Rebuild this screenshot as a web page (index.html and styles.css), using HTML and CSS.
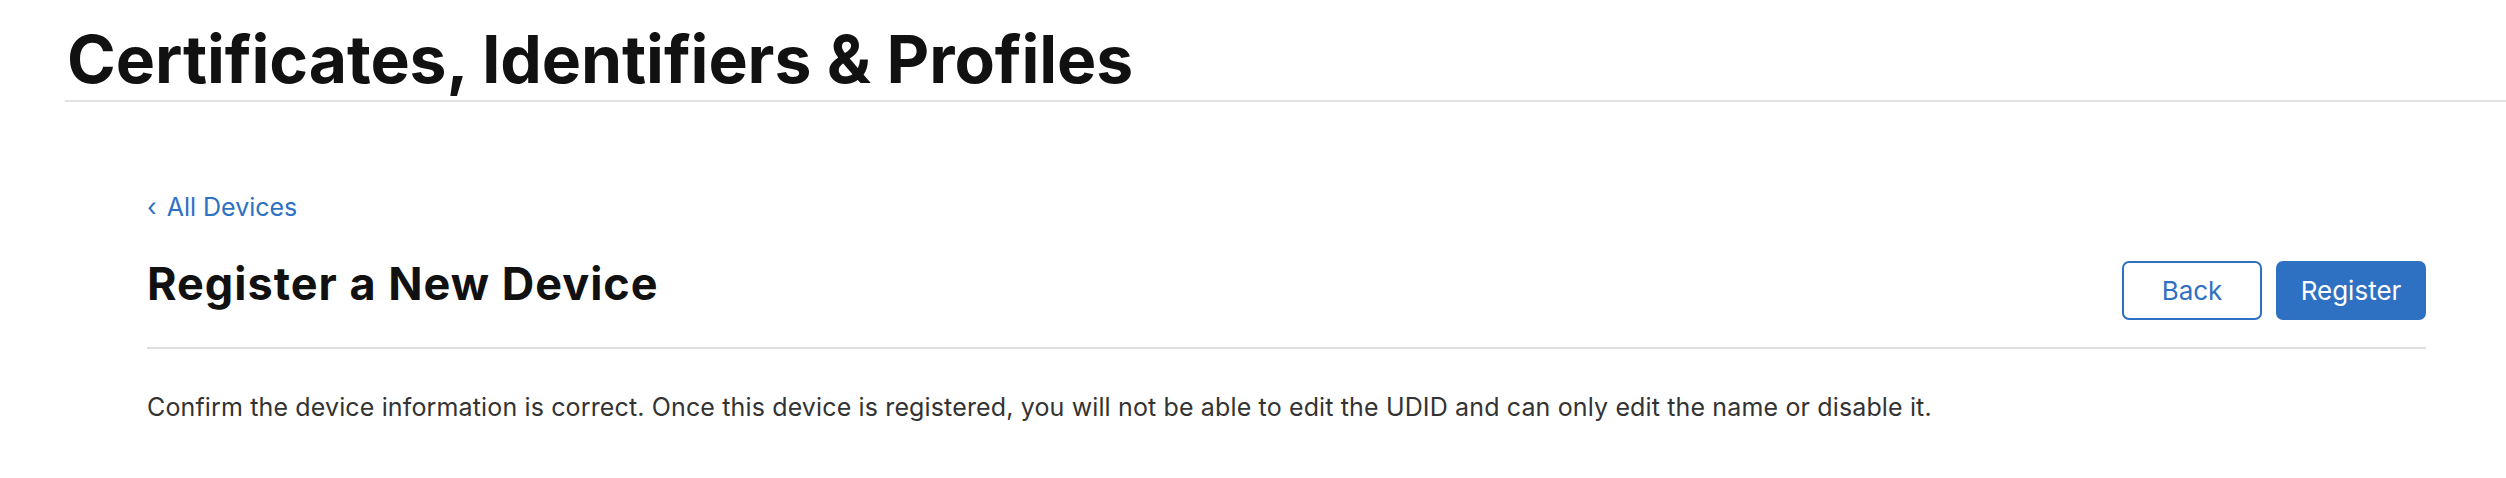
FILE: index.html
```html
<!DOCTYPE html>
<html lang="en">
<head>
<meta charset="utf-8">
<title>Certificates, Identifiers &amp; Profiles</title>
<link rel="stylesheet" href="styles.css">
</head>
<body>
  <header class="site-header">
    <h1 class="site-title">Certificates, Identifiers &amp; Profiles</h1>
  </header>
  <main class="content">
    <a class="back-link" href="#"><span class="chev">‹</span> All Devices</a>
    <div class="page-head">
      <h2 class="page-title">Register a New Device</h2>
      <div class="actions">
        <button class="btn btn-outline" type="button">Back</button>
        <button class="btn btn-primary" type="button">Register</button>
      </div>
    </div>
    <p class="desc">Confirm the device information is correct. Once this device is registered, you will not be able to edit the UDID and can only edit the name or disable it.</p>
  </main>
</body>
</html>
```
FILE: styles.css
```css
html, body {
  margin: 0;
  padding: 0;
  background: #fff;
}
body {
  font-family: Inter, "Noto Sans", "Liberation Sans", sans-serif;
  color: #111;
}
.site-header {
  margin-left: 65px;
  padding: 26px 0 8px 2px;
  border-bottom: 2px solid #e3e3e3;
}
.site-title {
  margin: 0;
  font-size: 66px;
  line-height: 66px;
  font-weight: 700;
  letter-spacing: -0.1px;
  color: #111;
}
.content {
  padding: 0 80px 0 147px;
}
.back-link {
  display: inline-block;
  margin-top: 90px;
  font-size: 25px;
  line-height: 30px;
  color: #2e71c3;
  text-decoration: none;
}
.chev {
  margin-right: 3px;
}
.page-head {
  display: flex;
  justify-content: space-between;
  align-items: flex-start;
  margin-top: 35px;
  padding-bottom: 27px;
  border-bottom: 2px solid #dedede;
}
.page-title {
  margin: 0;
  font-size: 45px;
  line-height: 53px;
  font-weight: 700;
  letter-spacing: 1px;
  color: #111;
}
.actions {
  display: flex;
  gap: 14px;
  margin-top: 4px;
}
.btn {
  height: 59px;
  border-radius: 7px;
  font-family: inherit;
  font-size: 26px;
  padding: 0;
  cursor: pointer;
}
.btn-outline {
  width: 140px;
  background: #fff;
  color: #2e71c3;
  border: 2px solid #2e71c3;
}
.btn-primary {
  width: 150px;
  background: #2e71c3;
  color: #fff;
  border: 2px solid #2e71c3;
}
.desc {
  margin: 40px 0 0;
  font-size: 25px;
  line-height: 37px;
  letter-spacing: 0.14px;
  color: #333;
}
```
